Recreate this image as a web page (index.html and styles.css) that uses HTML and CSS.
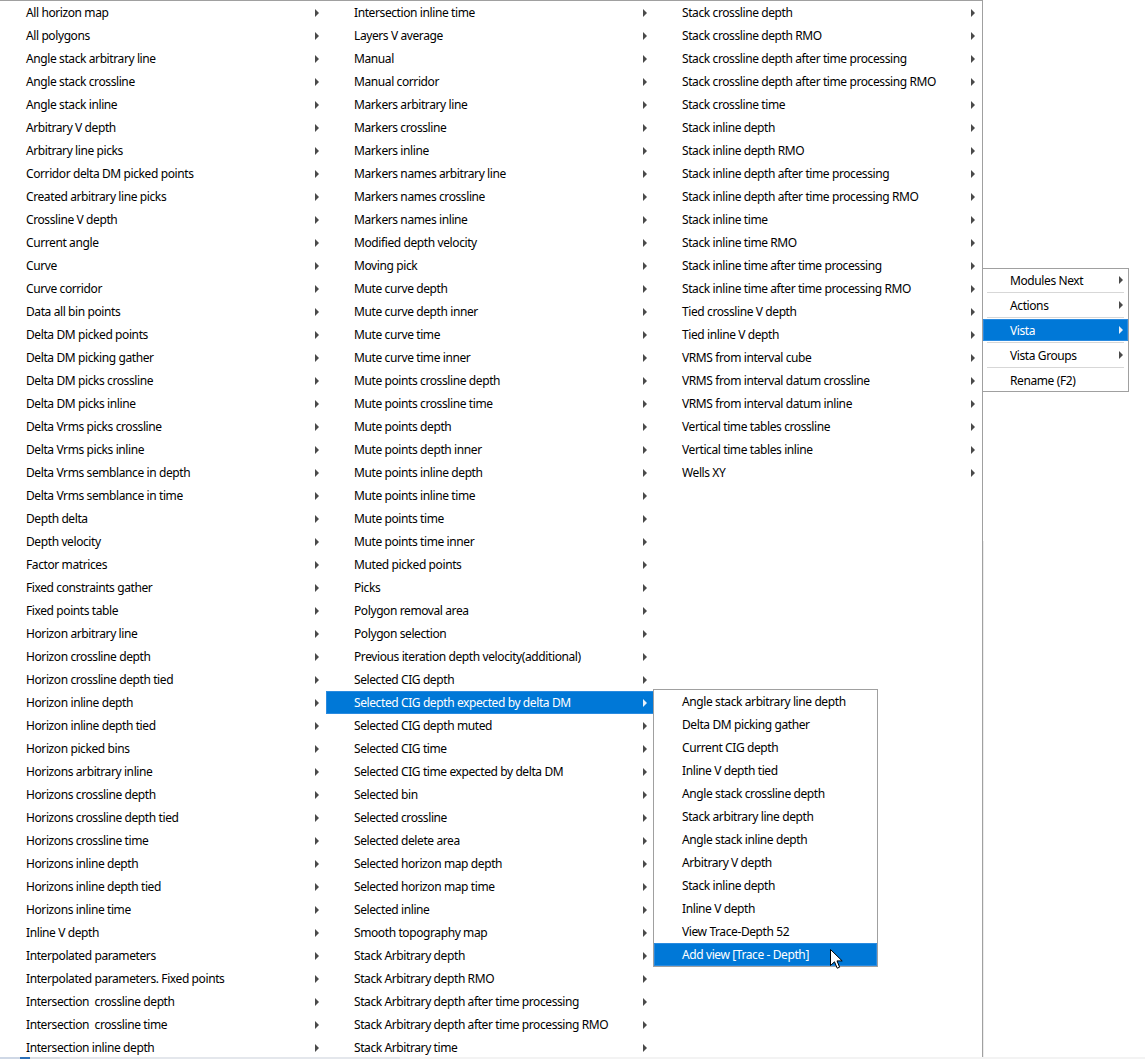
FILE: index.html
```html
<!DOCTYPE html>
<html>
<head>
<meta charset="utf-8">
<link rel="stylesheet" href="styles.css">
</head>
<body>
<div class="bg-stripe"></div>

<div class="menu main-menu">
  <div class="col">
    <div class="item"><span>All horizon map</span><i class="arrow"></i></div>
    <div class="item"><span>All polygons</span><i class="arrow"></i></div>
    <div class="item"><span>Angle stack arbitrary line</span><i class="arrow"></i></div>
    <div class="item"><span>Angle stack crossline</span><i class="arrow"></i></div>
    <div class="item"><span>Angle stack inline</span><i class="arrow"></i></div>
    <div class="item"><span>Arbitrary V depth</span><i class="arrow"></i></div>
    <div class="item"><span>Arbitrary line picks</span><i class="arrow"></i></div>
    <div class="item"><span>Corridor delta DM picked points</span><i class="arrow"></i></div>
    <div class="item"><span>Created arbitrary line picks</span><i class="arrow"></i></div>
    <div class="item"><span>Crossline V depth</span><i class="arrow"></i></div>
    <div class="item"><span>Current angle</span><i class="arrow"></i></div>
    <div class="item"><span>Curve</span><i class="arrow"></i></div>
    <div class="item"><span>Curve corridor</span><i class="arrow"></i></div>
    <div class="item"><span>Data all bin points</span><i class="arrow"></i></div>
    <div class="item"><span>Delta DM picked points</span><i class="arrow"></i></div>
    <div class="item"><span>Delta DM picking gather</span><i class="arrow"></i></div>
    <div class="item"><span>Delta DM picks crossline</span><i class="arrow"></i></div>
    <div class="item"><span>Delta DM picks inline</span><i class="arrow"></i></div>
    <div class="item"><span>Delta Vrms picks crossline</span><i class="arrow"></i></div>
    <div class="item"><span>Delta Vrms picks inline</span><i class="arrow"></i></div>
    <div class="item"><span>Delta Vrms semblance in depth</span><i class="arrow"></i></div>
    <div class="item"><span>Delta Vrms semblance in time</span><i class="arrow"></i></div>
    <div class="item"><span>Depth delta</span><i class="arrow"></i></div>
    <div class="item"><span>Depth velocity</span><i class="arrow"></i></div>
    <div class="item"><span>Factor matrices</span><i class="arrow"></i></div>
    <div class="item"><span>Fixed constraints gather</span><i class="arrow"></i></div>
    <div class="item"><span>Fixed points table</span><i class="arrow"></i></div>
    <div class="item"><span>Horizon arbitrary line</span><i class="arrow"></i></div>
    <div class="item"><span>Horizon crossline depth</span><i class="arrow"></i></div>
    <div class="item"><span>Horizon crossline depth tied</span><i class="arrow"></i></div>
    <div class="item"><span>Horizon inline depth</span><i class="arrow"></i></div>
    <div class="item"><span>Horizon inline depth tied</span><i class="arrow"></i></div>
    <div class="item"><span>Horizon picked bins</span><i class="arrow"></i></div>
    <div class="item"><span>Horizons arbitrary inline</span><i class="arrow"></i></div>
    <div class="item"><span>Horizons crossline depth</span><i class="arrow"></i></div>
    <div class="item"><span>Horizons crossline depth tied</span><i class="arrow"></i></div>
    <div class="item"><span>Horizons crossline time</span><i class="arrow"></i></div>
    <div class="item"><span>Horizons inline depth</span><i class="arrow"></i></div>
    <div class="item"><span>Horizons inline depth tied</span><i class="arrow"></i></div>
    <div class="item"><span>Horizons inline time</span><i class="arrow"></i></div>
    <div class="item"><span>Inline V depth</span><i class="arrow"></i></div>
    <div class="item"><span>Interpolated parameters</span><i class="arrow"></i></div>
    <div class="item"><span>Interpolated parameters. Fixed points</span><i class="arrow"></i></div>
    <div class="item"><span>Intersection&nbsp; crossline depth</span><i class="arrow"></i></div>
    <div class="item"><span>Intersection&nbsp; crossline time</span><i class="arrow"></i></div>
    <div class="item"><span>Intersection inline depth</span><i class="arrow"></i></div>
  </div>
  <div class="col">
    <div class="item"><span>Intersection inline time</span><i class="arrow"></i></div>
    <div class="item"><span>Layers V average</span><i class="arrow"></i></div>
    <div class="item"><span>Manual</span><i class="arrow"></i></div>
    <div class="item"><span>Manual corridor</span><i class="arrow"></i></div>
    <div class="item"><span>Markers arbitrary line</span><i class="arrow"></i></div>
    <div class="item"><span>Markers crossline</span><i class="arrow"></i></div>
    <div class="item"><span>Markers inline</span><i class="arrow"></i></div>
    <div class="item"><span>Markers names arbitrary line</span><i class="arrow"></i></div>
    <div class="item"><span>Markers names crossline</span><i class="arrow"></i></div>
    <div class="item"><span>Markers names inline</span><i class="arrow"></i></div>
    <div class="item"><span>Modified depth velocity</span><i class="arrow"></i></div>
    <div class="item"><span>Moving pick</span><i class="arrow"></i></div>
    <div class="item"><span>Mute curve depth</span><i class="arrow"></i></div>
    <div class="item"><span>Mute curve depth inner</span><i class="arrow"></i></div>
    <div class="item"><span>Mute curve time</span><i class="arrow"></i></div>
    <div class="item"><span>Mute curve time inner</span><i class="arrow"></i></div>
    <div class="item"><span>Mute points crossline depth</span><i class="arrow"></i></div>
    <div class="item"><span>Mute points crossline time</span><i class="arrow"></i></div>
    <div class="item"><span>Mute points depth</span><i class="arrow"></i></div>
    <div class="item"><span>Mute points depth inner</span><i class="arrow"></i></div>
    <div class="item"><span>Mute points inline depth</span><i class="arrow"></i></div>
    <div class="item"><span>Mute points inline time</span><i class="arrow"></i></div>
    <div class="item"><span>Mute points time</span><i class="arrow"></i></div>
    <div class="item"><span>Mute points time inner</span><i class="arrow"></i></div>
    <div class="item"><span>Muted picked points</span><i class="arrow"></i></div>
    <div class="item"><span>Picks</span><i class="arrow"></i></div>
    <div class="item"><span>Polygon removal area</span><i class="arrow"></i></div>
    <div class="item"><span>Polygon selection</span><i class="arrow"></i></div>
    <div class="item"><span>Previous iteration depth velocity(additional)</span><i class="arrow"></i></div>
    <div class="item"><span>Selected CIG depth</span><i class="arrow"></i></div>
    <div class="item active"><span>Selected CIG depth expected by delta DM</span><i class="arrow"></i></div>
    <div class="item"><span>Selected CIG depth muted</span><i class="arrow"></i></div>
    <div class="item"><span>Selected CIG time</span><i class="arrow"></i></div>
    <div class="item"><span>Selected CIG time expected by delta DM</span><i class="arrow"></i></div>
    <div class="item"><span>Selected bin</span><i class="arrow"></i></div>
    <div class="item"><span>Selected crossline</span><i class="arrow"></i></div>
    <div class="item"><span>Selected delete area</span><i class="arrow"></i></div>
    <div class="item"><span>Selected horizon map depth</span><i class="arrow"></i></div>
    <div class="item"><span>Selected horizon map time</span><i class="arrow"></i></div>
    <div class="item"><span>Selected inline</span><i class="arrow"></i></div>
    <div class="item"><span>Smooth topography map</span><i class="arrow"></i></div>
    <div class="item"><span>Stack Arbitrary depth</span><i class="arrow"></i></div>
    <div class="item"><span>Stack Arbitrary depth RMO</span><i class="arrow"></i></div>
    <div class="item"><span>Stack Arbitrary depth after time processing</span><i class="arrow"></i></div>
    <div class="item"><span>Stack Arbitrary depth after time processing RMO</span><i class="arrow"></i></div>
    <div class="item"><span>Stack Arbitrary time</span><i class="arrow"></i></div>
  </div>
  <div class="col">
    <div class="item"><span>Stack crossline depth</span><i class="arrow"></i></div>
    <div class="item"><span>Stack crossline depth RMO</span><i class="arrow"></i></div>
    <div class="item"><span>Stack crossline depth after time processing</span><i class="arrow"></i></div>
    <div class="item"><span>Stack crossline depth after time processing RMO</span><i class="arrow"></i></div>
    <div class="item"><span>Stack crossline time</span><i class="arrow"></i></div>
    <div class="item"><span>Stack inline depth</span><i class="arrow"></i></div>
    <div class="item"><span>Stack inline depth RMO</span><i class="arrow"></i></div>
    <div class="item"><span>Stack inline depth after time processing</span><i class="arrow"></i></div>
    <div class="item"><span>Stack inline depth after time processing RMO</span><i class="arrow"></i></div>
    <div class="item"><span>Stack inline time</span><i class="arrow"></i></div>
    <div class="item"><span>Stack inline time RMO</span><i class="arrow"></i></div>
    <div class="item"><span>Stack inline time after time processing</span><i class="arrow"></i></div>
    <div class="item"><span>Stack inline time after time processing RMO</span><i class="arrow"></i></div>
    <div class="item"><span>Tied crossline V depth</span><i class="arrow"></i></div>
    <div class="item"><span>Tied inline V depth</span><i class="arrow"></i></div>
    <div class="item"><span>VRMS from interval cube</span><i class="arrow"></i></div>
    <div class="item"><span>VRMS from interval datum crossline</span><i class="arrow"></i></div>
    <div class="item"><span>VRMS from interval datum inline</span><i class="arrow"></i></div>
    <div class="item"><span>Vertical time tables crossline</span><i class="arrow"></i></div>
    <div class="item"><span>Vertical time tables inline</span><i class="arrow"></i></div>
    <div class="item"><span>Wells XY</span><i class="arrow"></i></div>
  </div>
</div>

<div class="menu sub-menu">
  <div class="item"><span>Angle stack arbitrary line depth</span></div>
  <div class="item"><span>Delta DM picking gather</span></div>
  <div class="item"><span>Current CIG depth</span></div>
  <div class="item"><span>Inline V depth tied</span></div>
  <div class="item"><span>Angle stack crossline depth</span></div>
  <div class="item"><span>Stack arbitrary line depth</span></div>
  <div class="item"><span>Angle stack inline depth</span></div>
  <div class="item"><span>Arbitrary V depth</span></div>
  <div class="item"><span>Stack inline depth</span></div>
  <div class="item"><span>Inline V depth</span></div>
  <div class="item"><span>View Trace-Depth 52</span></div>
  <div class="item active"><span>Add view [Trace - Depth]</span></div>
</div>

<div class="menu ctx-menu">
  <div class="item ctx"><span>Modules Next</span><i class="arrow"></i></div>
  <div class="sep"></div>
  <div class="item ctx"><span>Actions</span><i class="arrow"></i></div>
  <div class="sep"></div>
  <div class="item ctx active"><span>Vista</span><i class="arrow"></i></div>
  <div class="sep"></div>
  <div class="item ctx"><span>Vista Groups</span><i class="arrow"></i></div>
  <div class="sep"></div>
  <div class="item ctx"><span>Rename (F2)</span></div>
</div>

<svg class="cursor" width="14" height="21" viewBox="0 0 14 21">
  <path d="M0.5 0.5 L0.5 16.5 L4.5 12.8 L7.2 19.2 L9.6 18.2 L7 11.9 L12.2 11.9 Z" fill="#fff" stroke="#000" stroke-width="1" stroke-linejoin="miter"/>
</svg>

<div class="taskbar"></div>
</body>
</html>
```

FILE: styles.css
```css
html, body {
  margin: 0;
  padding: 0;
}

body {
  width: 1145px;
  height: 1059px;
  overflow: hidden;
  position: relative;
  background: #ffffff;
  font-family: "Noto Sans", "Open Sans", "DejaVu Sans", sans-serif;
  font-size: 12px;
  color: #000;
}

.menu {
  position: absolute;
  background: #ffffff;
  border: 1px solid #a0a0a0;
  box-sizing: border-box;
}

.main-menu {
  left: -3px;
  top: 0;
  display: flex;
  flex-direction: row;
  align-items: flex-start;
  height: 1060px;
  border-bottom-color: #444;
}

.col {
  width: 328px;
  display: flex;
  flex-direction: column;
}

.item {
  height: 23px;
  display: flex;
  align-items: center;
  justify-content: space-between;
  padding: 0 7px 0 28px;
  white-space: nowrap;
  box-sizing: border-box;
}

.item span {
  letter-spacing: -0.4px;
}

.item.active {
  background: #0078d7;
  color: #fff;
  box-shadow: inset 0 0 0 1px #2a8be0;
}

.arrow {
  display: block;
  width: 0;
  height: 0;
  border-left: 4px solid #4a4a4a;
  border-top: 4px solid transparent;
  border-bottom: 4px solid transparent;
}

.item.active .arrow {
  border-left-color: #e8f1fb;
}

.sub-menu {
  left: 653px;
  top: 689px;
  width: 225px;
  display: flex;
  flex-direction: column;
  border-color: #a0a0a0;
}

.ctx-menu {
  left: 982px;
  top: 268px;
  width: 147px;
  display: flex;
  flex-direction: column;
  border-color: #a0a0a0;
}

.item.ctx {
  height: 22px;
  padding: 0 5px 0 27px;
}

.sep {
  height: 1px;
  margin: 1px 4px 1px 4px;
  background: #d7d7d7;
}

.bg-stripe {
  position: absolute;
  left: 982px;
  top: 541px;
  width: 2px;
  height: 518px;
  background: #ececec;
}

.cursor {
  position: absolute;
  left: 830px;
  top: 949px;
}

.taskbar {
  position: absolute;
  left: 0;
  top: 1057px;
  width: 1145px;
  height: 2px;
  background: linear-gradient(90deg, #cfd8e6 0 20px, #2a6fb8 20px 30px, #d9dde3 30px 60px, #e4e7ec 60px 400px, #f3f3f3 400px 1145px);
}
```
